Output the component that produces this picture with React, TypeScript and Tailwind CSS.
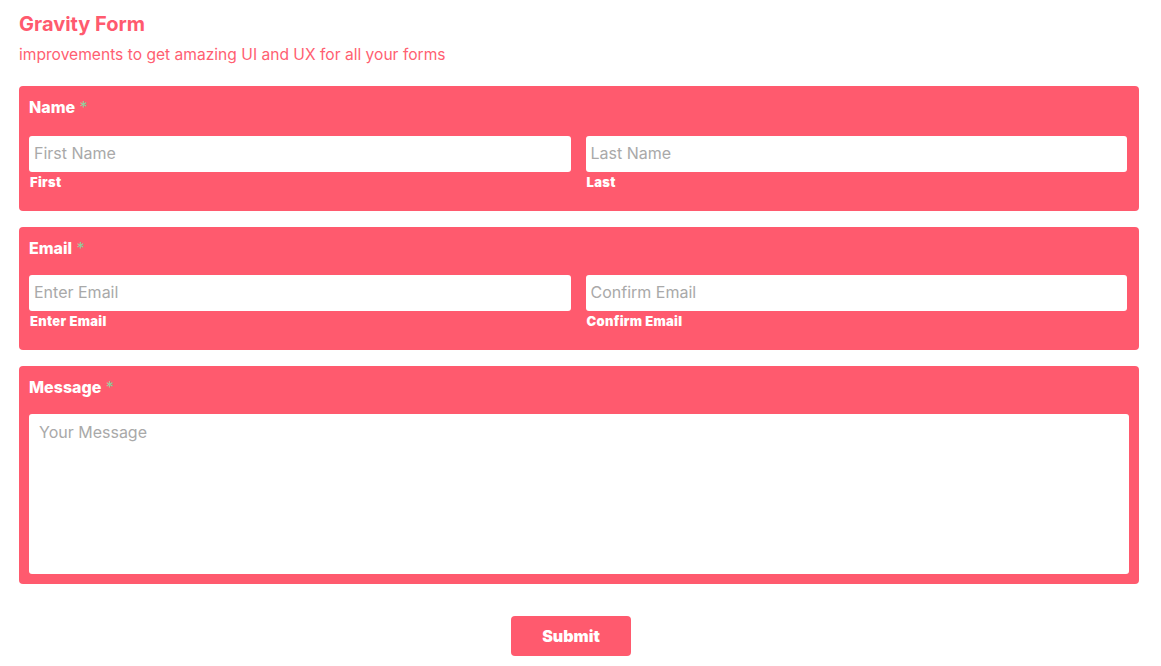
import React from "react";

const font = { fontFamily: "Inter, 'Liberation Sans', sans-serif" };

function Star() {
  return <span className="text-[#8fd19e] font-normal"> *</span>;
}

function TextField({ placeholder, label }: { placeholder: string; label: string }) {
  return (
    <div className="flex-1 flex flex-col">
      <input
        type="text"
        placeholder={placeholder}
        className="h-9 w-full rounded-[3px] bg-white px-[5px] pb-[2px] text-[16px] text-gray-700 placeholder:text-[#a9a9a9] outline-none"
      />
      <span className="mt-[2px] pl-px text-[13px] font-black text-white tracking-[0.3px] leading-[17px]">
        {label}
      </span>
    </div>
  );
}

export default function App() {
  return (
    <div style={font} className="w-full min-h-screen bg-white pl-[19px] pr-[22px] pt-[11px]">
      {/* Header */}
      <h1 className="text-[20px] font-bold text-[#ff5a6e] leading-[26px]">Gravity Form</h1>
      <p className="mt-[6px] text-[15.6px] text-[#ff5f72] leading-[24px]">
        improvements to get amazing UI and UX for all your forms
      </p>

      {/* body */}
      <form className="mt-[19px] flex flex-col gap-4" onSubmit={(e) => e.preventDefault()}>
        <div className="rounded bg-[#ff5a6e] pl-[10px] pr-[12px] pt-[10px] pb-[20px]">
          <div className="text-[16px] font-extrabold text-white leading-[22px]">
            Name<Star />
          </div>
          <div className="mt-[18px] flex gap-[15px]">
            <TextField placeholder="First Name" label="First" />
            <TextField placeholder="Last Name" label="Last" />
          </div>
        </div>

        <div className="rounded bg-[#ff5a6e] pl-[10px] pr-[12px] pt-[10px] pb-[20px]">
          <div className="text-[16px] font-extrabold text-white leading-[22px]">
            Email<Star />
          </div>
          <div className="mt-[16px] flex gap-[15px]">
            <TextField placeholder="Enter Email" label="Enter Email" />
            <TextField placeholder="Confirm Email" label="Confirm Email" />
          </div>
        </div>

        <div className="rounded bg-[#ff5a6e] px-[10px] pt-[10px] pb-[10px]">
          <div className="text-[16px] font-extrabold text-white leading-[22px]">
            Message<Star />
          </div>
          <textarea
            placeholder="Your Message"
            className="mt-[16px] block h-40 w-full resize-none rounded-[3px] bg-white px-[10px] py-[6px] text-[16px] text-gray-700 placeholder:text-[#a9a9a9] outline-none"
          />
        </div>

        <div className="mt-4 flex justify-center pr-[16px]">
          <button
            type="submit"
            className="h-10 w-[120px] rounded bg-[#ff5a6e] text-[16px] font-black text-white"
          >
            Submit
          </button>
        </div>
      </form>
    </div>
  );
}
